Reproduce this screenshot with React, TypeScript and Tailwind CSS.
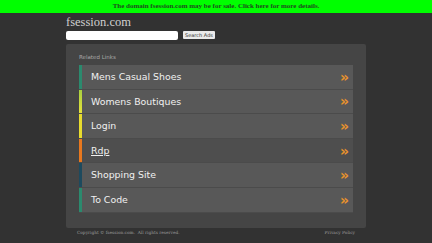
const links = [
  { label: "Mens Casual Shoes", bar: "bg-[#2b8a6e]", row: "bg-[#585858]" },
  { label: "Womens Boutiques", bar: "bg-gradient-to-b from-[#a8d040] to-[#e6e23a]", row: "bg-[#585858]" },
  { label: "Login", bar: "bg-[#e8dc2e]", row: "bg-[#585858]" },
  { label: "Rdp", bar: "bg-[#e8781e]", row: "bg-[#4e4e4e]", underline: true },
  { label: "Shopping Site", bar: "bg-[#1d4a5e]", row: "bg-[#585858]" },
  { label: "To Code", bar: "bg-[#2b8a6e]", row: "bg-[#585858]" },
]

export default function App() {
  return (
    <div className="w-[432px] h-[243px] bg-[#323232] overflow-hidden flex flex-col">
      <div className="h-[13px] bg-[#00ff00] flex items-center justify-center text-[7px] text-[#1f4d1f] font-bold font-['Liberation_Serif',serif] leading-none">
        The domain fsession.com may be for sale. Click here for more details.
      </div>

      <div className="w-[300px] ml-[66px] flex flex-col">
        <div className="text-[12.5px] leading-none mt-[3px] text-[#cfcfcf] font-['Liberation_Serif',serif]">fsession.com</div>
        <div className="flex items-center gap-[5px] mt-[2px]">
          <div className="w-[112px] h-[9px] bg-white rounded-[2px]" />
          <div className="h-[8px] w-[32px] bg-[#eaeaea] rounded-[1px] flex items-center justify-center text-[5px] text-[#333] font-['DejaVu_Sans',sans-serif] leading-none">
            Search Ads
          </div>
        </div>

        <div className="mt-[4px] h-[184px] bg-[#454545] rounded-[2px] px-[13px] pt-[11px]">
          <div className="text-[5.5px] leading-none text-[#a8a8a8] font-['DejaVu_Sans',sans-serif] mb-[5px]">Related Links</div>
          <div className="flex flex-col">
            {links.map((l) => (
              <div key={l.label} className={`h-[24.6px] flex items-stretch border-b border-[#4b4b4b] ${l.row}`}>
                <div className={`w-[3px] ${l.bar}`} />
                <div className="flex-1 flex items-center justify-between pl-[9px] pr-[4px]">
                  <span
                    className={`text-[9.4px] text-[#f0f0f0] font-['DejaVu_Sans',sans-serif] leading-none ${l.underline ? "underline" : ""}`}
                  >
                    {l.label}
                  </span>
                  <span className="text-[14px] font-bold text-[#e8922c] font-['DejaVu_Sans',sans-serif] leading-none">»</span>
                </div>
              </div>
            ))}
          </div>
        </div>

        <div className="flex justify-between px-[11px] mt-[3px] text-[4.3px] text-[#9a9a9a] font-['DejaVu_Serif',serif] leading-none">
          <span>Copyright © fsession.com.&nbsp; All rights reserved.</span>
          <span>Privacy Policy</span>
        </div>
      </div>
    </div>
  )
}
